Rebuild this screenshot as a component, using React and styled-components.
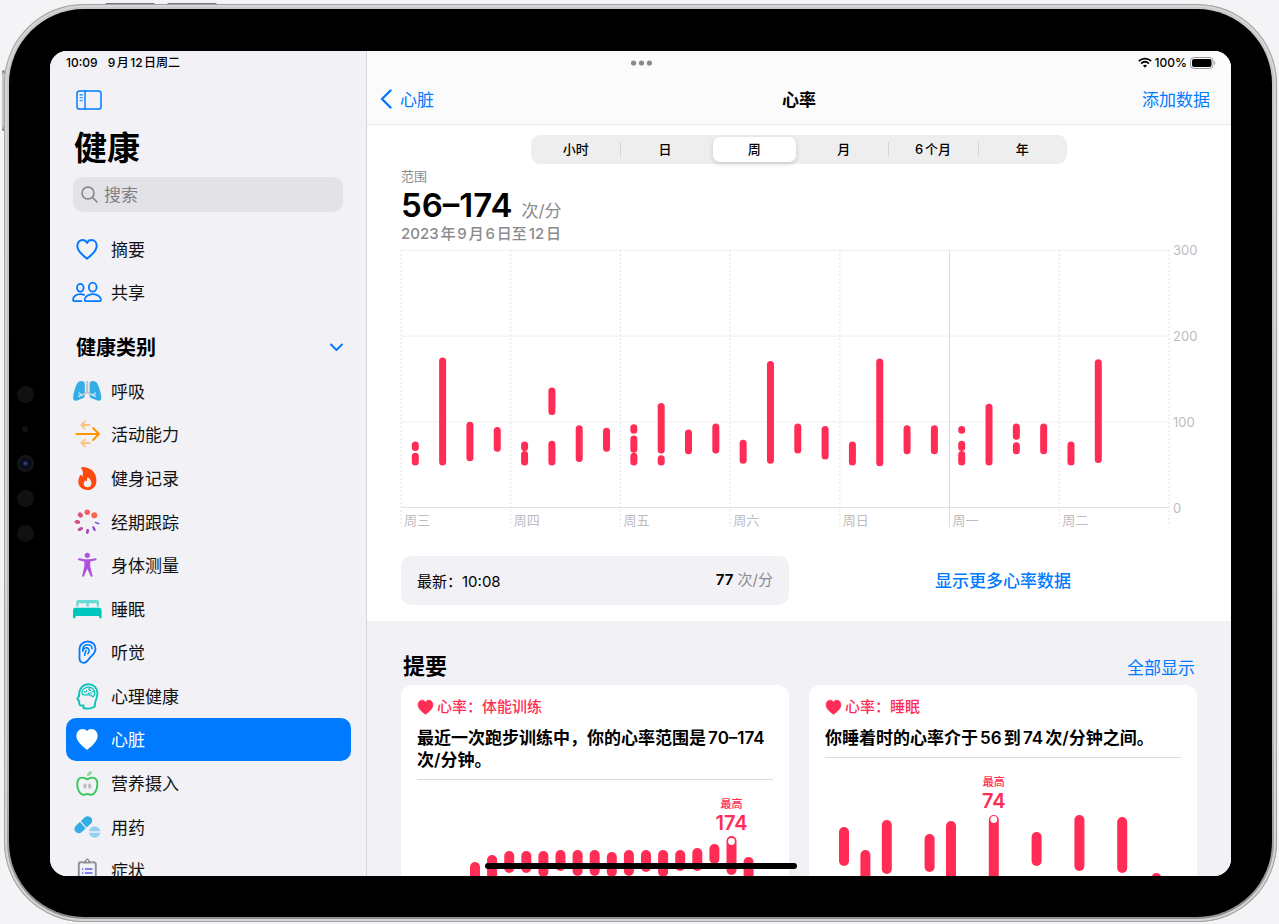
import React, { useState } from "react";
import styled, { createGlobalStyle, css } from "styled-components";

const BLUE = "#007aff";
const PINK = "#ff2d55";
const GREY = "#8a8a8e";
const FONT = `Inter, "Noto Sans CJK SC", sans-serif`;

const GlobalStyle = createGlobalStyle`
  *, *::before, *::after { box-sizing: border-box; }
  body { margin: 0; background: #f4f4f6; font-family: ${FONT}; color: #000; text-autospace: normal; }
  h1, h2, h3, p, ul { margin: 0; padding: 0; }
  ul { list-style: none; }
  button, input { font: inherit; color: inherit; background: none; border: 0; padding: 0; margin: 0; }
  button { cursor: pointer; }
  a { color: ${BLUE}; text-decoration: none; }
  svg { display: block; flex: none; }
`;

/* ---------- device ---------- */

const Page = styled.div`
  position: relative;
  display: flex;
  height: 100vh;
  padding: 4px 2px 2px 4px;
`;

const SideKey = styled.span`
  position: absolute;
  background: #77777a;
  border-radius: 2px;
  ${(p) =>
    p.$edge === "top"
      ? css`top: 3px; left: ${p.$at}px; width: 50px; height: 3px;`
      : css`left: 2px; top: ${p.$at}px; width: 3px; height: 61px; background: linear-gradient(#77777a, #c4c4c7 5px 56px, #77777a);`}
`;

const Frame = styled.div`
  position: relative;
  flex: 1;
  display: flex;
  min-width: 0;
  padding: 5px;
  border-radius: 80px;
  background: linear-gradient(#c9c9cb, #b4b4b6 80%, #8f8f91);
  box-shadow: inset 0 0 0 1px #a3a3a5, inset 0 0 0 3px #d6d6d8;
`;

const Bezel = styled.div`
  flex: 1;
  display: flex;
  min-width: 0;
  padding: 42px 41px 41px 0;
  border-radius: 75px;
  background: #000;
`;

const Sensors = styled.div`
  flex: none;
  width: 41px;
  display: flex;
  flex-direction: column;
  align-items: center;
  justify-content: center;
  gap: 18px;
  padding-right: 9px;
`;

const Sensor = styled.span`
  width: ${(p) => (p.$small ? 6 : 17)}px;
  height: ${(p) => (p.$small ? 6 : 17)}px;
  margin: ${(p) => (p.$small ? "5px 0" : "0")};
  border-radius: 50%;
  background: ${(p) => (p.$lens ? "radial-gradient(#24407f 0 1px, #0b0c18 3px 6px, #17171a 7px)" : "#111112")};
`;

const Screen = styled.div`
  position: relative;
  flex: 1;
  display: flex;
  min-width: 0;
  overflow: hidden;
  border-radius: 17px;
  background: #fff;
`;

const StatusBar = styled.div`
  position: absolute;
  z-index: 2;
  top: 0;
  left: 0;
  right: 0;
  height: 24px;
  padding: 0 15px 1px 16px;
  display: grid;
  grid-template-columns: 1fr auto 1fr;
  align-items: center;
  font-size: 12px;
  line-height: 16px;
  font-weight: 500;
`;

const StatusGroup = styled.div`
  display: flex;
  align-items: center;
  gap: ${(p) => p.$gap}px;
  justify-content: ${(p) => (p.$end ? "flex-end" : "flex-start")};
`;

const HomeIndicator = styled.div`
  position: absolute;
  z-index: 2;
  bottom: 7px;
  left: 0;
  right: 0;
  margin: 0 auto;
  width: 312px;
  height: 6px;
  border-radius: 3px;
  background: #000;
`;

/* ---------- sidebar ---------- */

const Sidebar = styled.nav`
  flex: none;
  width: 317px;
  padding: 0 15px 0 16px;
  overflow: hidden;
  background: #f2f1f6;
  border-right: 1px solid #d6d6da;
`;

const SidebarTop = styled.div`
  height: 73px;
  padding: 24px 0 0 10px;
  display: flex;
  align-items: center;
`;

const AppTitle = styled.h1`
  padding-left: 8px;
  font-size: 33px;
  line-height: 48px;
  font-weight: 700;
`;

const SearchField = styled.label`
  display: flex;
  align-items: center;
  gap: 6px;
  height: 35px;
  margin: 5px 8px 15px 7px;
  padding: 0 8px;
  border-radius: 10px;
  background: #e3e2e7;
  color: #808085;

  input {
    flex: 1;
    min-width: 0;
    font-size: 17px;
    outline: 0;
  }
  input::placeholder { color: #808085; opacity: 1; }
`;

const NavList = styled.ul`
  display: grid;
  grid-auto-rows: 1fr;
  height: ${(p) => p.$height}px;
`;

const NavLink = styled.a`
  display: flex;
  align-items: center;
  gap: 9px;
  height: 100%;
  padding-left: 6px;
  border-radius: 10px;
  font-size: 17px;
  color: ${(p) => (p.$active ? "#fff" : "#111")};
  background: ${(p) => (p.$active ? BLUE : "transparent")};
`;

const NavLabel = styled.span`
  padding-bottom: 1px;
`;

const GroupToggle = styled.button`
  display: flex;
  align-items: center;
  justify-content: space-between;
  width: 100%;
  height: 44px;
  margin-top: 11px;
  padding: 0 8px 0 10px;
  font-size: 20px;
  font-weight: 700;
  color: #000;
`;

/* ---------- main ---------- */

const Main = styled.main`
  flex: 1;
  min-width: 0;
  overflow: hidden;
  background: #f2f1f6;
`;

const Header = styled.header`
  display: grid;
  grid-template-columns: 1fr auto 1fr;
  align-items: center;
  height: 74px;
  padding: 24px 13px 2px;
  background: #fbfbfc;
  border-bottom: 1px solid #e8e8ea;
  font-size: 17px;
`;

const BackLink = styled.a`
  display: flex;
  align-items: center;
  gap: 8px;
`;

const HeaderTitle = styled.h2`
  font-size: 17px;
  font-weight: 700;
`;

const HeaderAction = styled.button`
  justify-self: end;
  margin-right: 8px;
  color: ${BLUE};
`;

const Panel = styled.section`
  padding: 10px 34px 16px;
  background: #fff;
`;

const Segmented = styled.div`
  display: grid;
  grid-template-columns: repeat(6, 1fr);
  width: 68%;
  max-width: 536px;
  height: 29px;
  margin: 0 auto 3px;
  padding: 2px 0;
  border-radius: 9px;
  background: #eeeeef;
`;

const Segment = styled.button`
  position: relative;
  margin: 0 3px;
  padding-bottom: 2px;
  border-radius: 7px;
  font-size: 13px;
  font-weight: 500;
  ${(p) => p.$active && css`background: #fff; box-shadow: 0 2px 5px rgba(0, 0, 0, 0.16);`}
  ${(p) =>
    p.$divided &&
    css`
      &::before {
        content: "";
        position: absolute;
        left: -3px;
        top: 5px;
        bottom: 5px;
        width: 1px;
        background: #d5d5d8;
      }
    `}
`;

const RangeLabel = styled.p`
  font-size: 13px;
  line-height: 18px;
  color: ${GREY};
`;

const RangeValue = styled.p`
  display: flex;
  align-items: baseline;
  gap: 9px;
  height: 40px;
  font-size: 33px;
  line-height: 40px;
  font-weight: 600;
`;

const Unit = styled.span`
  font-size: ${(p) => p.$size}px;
  line-height: 20px;
  font-weight: 400;
  color: ${GREY};
`;

const RangeDate = styled.p`
  font-size: 15px;
  line-height: 18px;
  font-weight: 500;
  color: ${GREY};
`;

const ChartSvg = styled.svg`
  width: 100%;
  height: auto;
  margin: 7px 0 28px;
  overflow: visible;
  font-size: 13px;
  fill: #bcbcc0;
`;

const Columns = styled.div`
  display: grid;
  grid-template-columns: 1fr 1fr;
  gap: 20px;
`;

const LatestCard = styled.div`
  display: flex;
  align-items: center;
  justify-content: space-between;
  height: 49px;
  padding: 0 16px 1px;
  border-radius: 10px;
  background: #f2f1f6;
  font-size: 15px;

  strong { font-weight: 600; }
`;

const MoreLink = styled.a`
  place-self: center;
  padding-bottom: 2px;
  font-size: 17px;
  font-weight: 500;
`;

const Highlights = styled.section`
  padding: 31px 34px 0;
`;

const SectionHead = styled.div`
  display: flex;
  align-items: baseline;
  justify-content: space-between;
  height: 28px;
  margin-bottom: 5px;
  padding: 0 2px;
  line-height: 28px;
  font-size: 17px;

  h2 { font-size: 22px; font-weight: 700; }
`;

const Card = styled.article`
  padding: 12px 16px 0;
  border-radius: 12px;
  background: #fff;
`;

const CardTitle = styled.h3`
  display: flex;
  align-items: center;
  gap: 3px;
  font-size: 15px;
  line-height: 20px;
  font-weight: 500;
  color: ${PINK};
`;

const CardText = styled.p`
  margin-top: 10px;
  padding-bottom: 8px;
  border-bottom: 1px solid #dcdcdf;
  font-size: 17px;
  line-height: 22px;
  font-weight: 600;
`;

const MiniSvg = styled.svg`
  width: 100%;
  height: auto;
  text-anchor: middle;
  fill: ${PINK};
`;

/* ---------- icons ---------- */

const HEART =
  "M15 24.6C11 21.6 5.3 17.4 5.3 12c0-3.4 2.3-5.9 5.2-5.9 2 0 3.6 1 4.5 2.8.9-1.8 2.5-2.8 4.5-2.8 2.9 0 5.2 2.5 5.2 5.9 0 5.4-5.7 9.6-9.7 12.6Z";

const Icon = ({ children, size = 30, ...rest }) => (
  <svg width={size} height={size} viewBox="0 0 30 30" fill="none" strokeLinecap="round" strokeLinejoin="round" aria-hidden="true" {...rest}>
    {children}
  </svg>
);

const icons = {
  heart: <path d={HEART} stroke={BLUE} strokeWidth="2" />,
  people: (
    <g stroke={BLUE} strokeWidth="1.8">
      <ellipse cx="20.7" cy="10.2" rx="3.9" ry="4.5" />
      <path d="M12.6 22.9c0-3 3.4-5.7 8.2-5.7s8.2 2.7 8.2 5.7c0 .7-.5 1.2-1.2 1.2h-14c-.7 0-1.2-.5-1.2-1.2Z" />
      <ellipse cx="8.3" cy="10.8" rx="3.3" ry="3.9" />
      <path d="M12 17.8c-1-.4-2.2-.6-3.6-.6-4.3 0-7.4 2.5-7.4 5.6 0 .8.5 1.3 1.2 1.3h7.3" />
    </g>
  ),
  lungs: (
    <g>
      <path d="M9.6 5C12 5 12.8 6.4 12.8 8.4V19.5C12.8 21.6 11.5 22.3 9.6 22.8L5 24.6C2.7 25.3 1 24.2 1.1 21.8C1.3 17.5 2.9 12 4.6 8.4C5.8 6 7.4 5 9.6 5Z" fill="#32ade6" />
      <path d="M20.8 5C18.4 5 17.6 6.4 17.6 8.4V19.5C17.6 21.6 18.9 22.3 20.8 22.8L25.4 24.6C27.7 25.3 29.4 24.2 29.3 21.8C29.1 17.5 27.5 12 25.8 8.4C24.6 6 23 5 20.8 5Z" fill="#32ade6" />
      <path d="M12.8 17.7 7 20.3M9.6 19.1 7 17M17.6 17.7 23.4 20.3M20.8 19.1 23.4 17" stroke="#bfe3f5" strokeWidth="1.6" />
      <path d="M15.2 5.8V16M15.2 16 12.6 18M15.2 16 17.8 18" stroke="#c3c3c8" strokeWidth="2.2" />
    </g>
  ),
  mobility: (
    <g>
      <path d="M4.5 15H27M21 9 27 15 21 21" stroke="#ff9500" strokeWidth="2" />
      <path d="M9.4 6H17.6M12.8 2.6 9.4 6 12.8 9.4M9.4 24H17.6M12.8 20.6 9.4 24 12.8 27.4" stroke="#fcc37f" strokeWidth="1.9" />
    </g>
  ),
  flame: (
    <path
      fillRule="evenodd"
      fill="#ff4a0b"
      d="M9.2 4.7C9.3 4.2 9.8 4 10.4 4C18 4 24.4 9 24.4 17.4C24.4 23.3 20.8 27 15.4 27C10 27 6.3 23.6 6.3 18.6C6.3 15.9 7.3 13.6 8.5 12C8.8 11.6 9.3 11.7 9.4 12.2C9.5 12.8 9.8 13.3 10.3 13.6C11.6 10.9 10.9 7.4 9.4 5.5C9.2 5.2 9.1 5 9.2 4.7ZM15.6 14.4C15.3 14.3 15 14.5 15.1 14.9C15.4 16.4 15 17.6 14.2 18.7C13.9 18.4 13.7 18 13.6 17.7C13.5 17.4 13.2 17.4 13 17.6C12.2 18.5 11.7 19.6 11.7 20.8C11.7 23 13.2 24.2 15.5 24.2C17.9 24.2 19.4 22.8 19.4 20.4C19.4 17.5 17.9 15.1 15.6 14.4Z"
    />
  ),
  cycle: (
    <g>
      <circle cx="15.3" cy="5.3" r="2.7" fill="#fb5b60" />
      <circle cx="22.3" cy="8.3" r="3" fill="#ff6550" />
      <ellipse cx="8.3" cy="8" rx="2.8" ry="2.4" transform="rotate(40 8.3 8)" fill="#e0567a" />
      <ellipse cx="5.3" cy="15" rx="2.8" ry="2" transform="rotate(8 5.3 15)" fill="#d4518a" />
      <ellipse cx="8.4" cy="22" rx="2.9" ry="1.7" transform="rotate(-25 8.4 22)" fill="#c04c9c" />
      <ellipse cx="15.5" cy="24.4" rx="1.5" ry="2.7" transform="rotate(10 15.5 24.4)" fill="#a94cae" />
      <ellipse cx="22" cy="21.6" rx="1.2" ry="2.9" transform="rotate(-28 22 21.6)" fill="#8a4fc8" />
      <ellipse cx="25" cy="16" rx="2.7" ry=".8" transform="rotate(20 25 16)" fill="#6a4fe0" />
    </g>
  ),
  body: (
    <g fill="#af52de">
      <circle cx="15.3" cy="5.3" r="2.6" />
      <path d="M7 8.3 13 9.2H17.6L23.6 8.3C24.8 8.2 25 9.9 23.9 10.2L18.3 11.4C18 14.5 18.2 16.5 18.8 18.8L20.5 25.6C20.7 26.9 19 27.3 18.5 26.1L15.3 18.8 12.1 26.1C11.6 27.3 9.9 26.9 10.2 25.6L11.8 18.8C12.4 16.5 12.6 14.5 12.3 11.4L6.7 10.2C5.6 9.9 5.8 8.2 7 8.3Z" />
    </g>
  ),
  bed: (
    <g>
      <path d="M4.3 12.6V8C4.3 6.7 5 6 6.3 6H25C26.3 6 27 6.7 27 8V12.6H24.8V10.6C24.8 9.7 24.3 9.2 23.4 9.2H18.2C17.3 9.2 16.8 9.7 16.8 10.6V12.6H14.4V10.6C14.4 9.7 13.9 9.2 13 9.2H7.9C7 9.2 6.5 9.7 6.5 10.6V12.6Z" fill="#6adcd6" />
      <path d="M3.4 13.8H27.2C28.7 13.8 29.6 14.7 29.6 16.2V23.6C29.6 24.6 27.1 24.6 27.1 23.6V22H3.5V23.6C3.5 24.6 1 24.6 1 23.6V16.2C1 14.7 1.9 13.8 3.4 13.8Z" fill="#00c7be" />
    </g>
  ),
  ear: (
    <g stroke={BLUE} strokeWidth="1.8">
      <path d="M7.5 12.5C7.5 7.8 10.8 4.5 15.6 4.5C20.3 4.5 23.5 7.5 23.5 11.7C23.5 15.8 20.5 17.9 18.2 20.3C16.3 22.3 15.2 25.8 11.9 25.8C9.2 25.8 7.5 24 7.5 21.3Z" />
      <path d="M10.8 14.2V12.6C10.8 9.6 12.7 7.7 15.5 7.7C18.2 7.7 20 9.3 20 11.7" strokeWidth="1.5" />
      <path d="M11 13.2C12 10.8 14 10.3 15.5 11C17.6 12 17.7 14.8 15.9 16.6M14.2 13.3C13.3 14.8 12.7 16.5 12.6 18.4" strokeWidth="1.5" />
    </g>
  ),
  mind: (
    <g stroke="#0fc3b8" strokeWidth="1.9">
      <path d="M11.5 27V24.5H9.3C7.9 24.5 7.2 23.7 7.2 22.3V20L5.6 18.5C5.2 18 5.2 17.6 5.6 17.1L7 15.2C6.7 8.2 10.6 3.3 16.6 3.3C22 3.3 25.4 7 25.4 12.2C25.4 17 23.6 18.6 23.2 21.5C22.9 23.4 22.8 24.8 22.8 25.5C20 27.5 15 28 11.5 27Z" />
      <path d="M10 12.5C9.8 8.6 12.8 6.2 16.5 6.2C20.4 6.2 22.8 8.7 22.7 12.2C22.7 14.2 21.8 15.7 20.6 15.6C19.4 15.5 19.6 13.8 17.7 13.8H12.3C10.9 13.8 10.1 13.4 10 12.5Z" strokeWidth="1.3" />
      <path d="M12.3 10.6C13.3 11.5 14.6 11 14.7 9.6M17.4 7.2C16.2 8.5 17.2 9.8 18.8 9.2M16 13.2C16 11.7 18.3 11.3 19.3 12.3M20.3 10.5 22 10.9" strokeWidth="1.2" />
    </g>
  ),
  heartFill: <path d={HEART} fill="#fff" stroke="#fff" strokeWidth="2" />,
  apple: (
    <g>
      <path d="M15.3 11.3C13.5 10.6 12.3 9.6 10.2 9.6C7 9.6 5.2 12.5 5.2 16.3C5.2 21 8 26.9 11.6 26.9C13.2 26.9 13.8 26 15.3 26C16.8 26 17.4 26.9 19 26.9C22.6 26.9 25.4 21 25.4 16.3C25.4 12.5 23.6 9.6 20.4 9.6C18.3 9.6 17.1 10.6 15.3 11.3Z" stroke="#34c759" strokeWidth="1.9" />
      <path d="M14.9 8.2C14.8 5.5 16.8 3.3 19.9 3C20.1 5.8 18 8 14.9 8.2Z" fill="#86dc9b" />
      <ellipse cx="13" cy="18" rx="1.6" ry="2.7" fill="#bcbcc0" />
      <ellipse cx="17.7" cy="18" rx="1.6" ry="2.7" fill="#bcbcc0" />
    </g>
  ),
  pills: (
    <g>
      <g transform="rotate(-43 11.3 12.7)">
        <rect x="0.8" y="8.3" width="21" height="8.8" rx="4.4" fill="#32ade6" />
        <path d="M11.3 7.5V18" stroke="#f2f1f6" strokeWidth="1.2" />
      </g>
      <circle cx="22.7" cy="20" r="5.8" fill="#93d0f1" />
      <path d="M16 20H30" stroke="#f2f1f6" strokeWidth="1.3" />
    </g>
  ),
  clipboard: (
    <g>
      <path d="M10 7.2H9C7.5 7.2 6.8 8 6.8 9.4V25.5C6.8 27 7.5 27.8 9 27.8H21.5C23 27.8 23.8 27 23.8 25.5V9.4C23.8 8 23 7.2 21.5 7.2H20.6" stroke="#8e8e93" strokeWidth="1.9" />
      <path d="M11 8.6V6.8C11 6.2 11.4 5.9 12 5.9H13C13.3 4.4 14.1 3.5 15.3 3.5C16.5 3.5 17.3 4.4 17.6 5.9H18.6C19.2 5.9 19.6 6.2 19.6 6.8V8.6Z" fill="#8e8e93" />
      <circle cx="15.3" cy="6" r=".9" fill="#f2f1f6" />
      <path d="M13.5 14H20M13.5 18H20M13.5 22H20M10.6 14H10.7M10.6 18H10.7M10.6 22H10.7" stroke="#5e5ce6" strokeWidth="1.5" />
    </g>
  ),
};

const SidebarIcon = () => (
  <svg width="27" height="20" viewBox="0 0 27 20" fill="none" stroke={BLUE} strokeLinecap="round" aria-hidden="true">
    <rect x="1" y="1" width="24" height="18" rx="2.6" strokeWidth="1.5" />
    <path d="M9 1V19" strokeWidth="1.4" />
    <path d="M4 4.9H6.3M4 7.8H6.3M4 10.7H6.3" strokeWidth="1.1" />
  </svg>
);

const SearchIcon = () => (
  <svg width="17" height="17" viewBox="0 0 17 17" fill="none" stroke="currentColor" strokeWidth="1.5" strokeLinecap="round" aria-hidden="true">
    <circle cx="7" cy="7" r="6" />
    <path d="M11.5 11.5 16 16" />
  </svg>
);

const Chevron = ({ d, w, h, sw }) => (
  <svg width={w} height={h} viewBox={`0 0 ${w} ${h}`} fill="none" stroke={BLUE} strokeWidth={sw} strokeLinecap="round" strokeLinejoin="round" aria-hidden="true">
    <path d={d} />
  </svg>
);

const Wifi = () => (
  <svg width="14" height="11" viewBox="0 0 14 11" fill="none" stroke="#000" strokeWidth="1.9" aria-hidden="true">
    <path d="M.8 4.2C4.3.7 9.7.7 13.2 4.2" />
    <path d="M3.1 6.6C5.4 4.5 8.6 4.5 10.9 6.6" />
    <path d="M7 10.8 4.9 8.6C6.1 7.6 7.9 7.6 9.1 8.6Z" fill="#000" stroke="none" />
  </svg>
);

const Battery = () => (
  <svg width="26" height="12" viewBox="0 0 26 12" fill="none" aria-hidden="true">
    <rect x=".5" y=".5" width="22.5" height="11" rx="3.3" stroke="#9a9a9d" />
    <rect x="2" y="2" width="19.5" height="8" rx="1.9" fill="#000" />
    <path d="M24.3 4V8C25.7 7.5 25.7 4.5 24.3 4Z" fill="#9a9a9d" />
  </svg>
);

const Dots = () => (
  <svg width="21" height="6" viewBox="0 0 21 6" fill="#8a8a8d" aria-hidden="true">
    <circle cx="2.6" cy="3" r="2.6" />
    <circle cx="10.5" cy="3" r="2.6" />
    <circle cx="18.4" cy="3" r="2.6" />
  </svg>
);

const PinkHeart = () => (
  <svg width="17" height="16" viewBox="4 4.5 22 21" aria-hidden="true">
    <path d={HEART} fill={PINK} stroke={PINK} strokeWidth="1" />
  </svg>
);

/* ---------- data ---------- */

const PRIMARY = [
  ["heart", "摘要"],
  ["people", "共享"],
];

const CATEGORIES = [
  ["lungs", "呼吸"],
  ["mobility", "活动能力"],
  ["flame", "健身记录"],
  ["cycle", "经期跟踪"],
  ["body", "身体测量"],
  ["bed", "睡眠"],
  ["ear", "听觉"],
  ["mind", "心理健康"],
  ["heartFill", "心脏"],
  ["apple", "营养摄入"],
  ["pills", "用药"],
  ["clipboard", "症状"],
];

const PERIODS = ["小时", "日", "周", "月", "6个月", "年"];
const DAYS = ["周三", "周四", "周五", "周六", "周日", "周一", "周二"];

/* [high, low] beats per minute, one entry for each six hours */
const WEEK = [
  [[77, 66], [64, 49]],
  [[175, 49]],
  [[100, 54]],
  [[94, 65]],
  [[77, 66], [66, 49]],
  [[140, 108], [78, 49]],
  [[96, 53]],
  [[93, 65]],
  [[97, 86], [84, 64], [64, 49]],
  [[122, 63], [61, 49]],
  [[91, 62]],
  [[98, 63]],
  [[79, 51]],
  [[171, 51]],
  [[98, 63]],
  [[95, 56]],
  [[77, 49]],
  [[174, 48]],
  [[96, 62]],
  [[96, 62]],
  [[95, 86], [78, 66], [66, 49]],
  [[121, 49]],
  [[98, 79], [76, 62]],
  [[98, 62]],
  [[77, 49]],
  [[173, 52]],
];

/* [column, top, bottom] */
const WORKOUT = [
  [0, 82, 106], [1, 75, 104], [2, 71, 93], [3, 71, 93], [4, 71, 97], [5, 70, 91],
  [6, 70, 96], [7, 70, 96], [8, 72, 97], [9, 70, 96], [10, 70, 92], [11, 70, 97],
  [12, 70, 91], [13, 68, 91], [14, 64, 84], [15, 56, 95], [16, 77, 102],
];

const SLEEP = [
  [0, 69, 108], [1, 92, 130], [2, 62, 116], [4, 76, 114], [5, 63, 124], [7, 57, 126],
  [9, 74, 108], [11, 57, 113], [13, 59, 115], [14.6, 115, 132],
];

/* ---------- charts ---------- */

const yOf = (bpm) => 257.5 - bpm * 0.857;

const WeekChart = () => {
  const day = 768 / 7;
  return (
    <ChartSvg viewBox="0 0 796 278" role="img" aria-label="心率">
      {[0, 100, 200, 300].map((v) => (
        <g key={v}>
          <line x1="0" x2="768" y1={yOf(v)} y2={yOf(v)} stroke={v ? "#f0f0f1" : "#e2e2e4"} />
          <text x="772" y={yOf(v) + 5}>{v}</text>
        </g>
      ))}
      {[...DAYS, ""].map((name, i) => (
        <g key={i}>
          <line
            x1={i * day}
            x2={i * day}
            y1="0"
            y2="277"
            stroke={i === 5 ? "#dcdcde" : "#e2e2e4"}
            strokeDasharray={i === 5 ? "none" : "2 2"}
          />
          <text x={i * day + 3} y="275">{name}</text>
        </g>
      ))}
      {WEEK.map((parts, i) =>
        parts.map(([hi, lo], j) => (
          <rect key={`${i}-${j}`} x={10.8 + i * 27.32} y={yOf(hi)} width="7" height={yOf(lo) - yOf(hi)} rx="3.5" fill={PINK} />
        ))
      )}
    </ChartSvg>
  );
};

const MiniChart = ({ bars, start, step, peak, value }) => {
  const px = start + step * peak;
  return (
    <MiniSvg viewBox="0 0 356 140" role="img" aria-label={`最高 ${value}`}>
      <text x={px} y="28" fontSize="11" fontWeight="500">最高</text>
      <text x={px} y="50" fontSize="20" fontWeight="600">{value}</text>
      {bars.map(([col, top, bottom]) => (
        <rect key={col} x={start + step * col - 5} y={top} width="10" height={bottom - top} rx="5" />
      ))}
      <circle cx={px} cy="61.5" r="3.4" fill="#fff" />
    </MiniSvg>
  );
};

/* ---------- app ---------- */

const NavItems = ({ items, height, active, onPick }) => (
  <NavList $height={height}>
    {items.map(([icon, label]) => (
      <li key={label}>
        <NavLink
          href="#"
          $active={active === label}
          onClick={(e) => {
            e.preventDefault();
            onPick(label);
          }}
        >
          <Icon>{icons[icon]}</Icon>
          <NavLabel>{label}</NavLabel>
        </NavLink>
      </li>
    ))}
  </NavList>
);

export default function App() {
  const [active, setActive] = useState("心脏");
  const [period, setPeriod] = useState(2);
  return (
    <>
      <GlobalStyle />
      <Page>
        <SideKey $edge="top" $at={105} />
        <SideKey $edge="top" $at={167} />
        <SideKey $edge="left" $at={70} />
        <Frame>
          <Bezel>
            <Sensors>
              <Sensor />
              <Sensor $small />
              <Sensor $lens />
              <Sensor />
              <Sensor />
            </Sensors>
            <Screen>
              <StatusBar>
                <StatusGroup $gap={10}>
                  <span>10:09</span>
                  <span>9月12日周二</span>
                </StatusGroup>
                <Dots />
                <StatusGroup $gap={3} $end>
                  <Wifi />
                  <span>100%</span>
                  <Battery />
                </StatusGroup>
              </StatusBar>

              <Sidebar>
                <SidebarTop>
                  <button type="button" aria-label="边栏">
                    <SidebarIcon />
                  </button>
                </SidebarTop>
                <AppTitle>健康</AppTitle>
                <SearchField>
                  <SearchIcon />
                  <input type="text" placeholder="搜索" aria-label="搜索" />
                </SearchField>
                <NavItems items={PRIMARY} height={87} active={active} onPick={setActive} />
                <GroupToggle type="button">
                  <NavLabel>健康类别</NavLabel>
                  <Chevron d="M1 1.5 6.5 7 12 1.5" w={13} h={9} sw={1.9} />
                </GroupToggle>
                <NavItems items={CATEGORIES} height={523} active={active} onPick={setActive} />
              </Sidebar>

              <Main>
                <Header>
                  <BackLink href="#">
                    <Chevron d="M10.5 1.5 2 10 10.5 18.5" w={12} h={20} sw={2.4} />
                    心脏
                  </BackLink>
                  <HeaderTitle>心率</HeaderTitle>
                  <HeaderAction type="button">添加数据</HeaderAction>
                </Header>

                <Panel>
                  <Segmented>
                    {PERIODS.map((name, i) => (
                      <Segment
                        key={name}
                        type="button"
                        aria-pressed={i === period}
                        $active={i === period}
                        $divided={i > 0 && i !== period && i !== period + 1}
                        onClick={() => setPeriod(i)}
                      >
                        {name}
                      </Segment>
                    ))}
                  </Segmented>
                  <RangeLabel>范围</RangeLabel>
                  <RangeValue>
                    56–174 <Unit $size={17}>次/分</Unit>
                  </RangeValue>
                  <RangeDate>2023年9月6日至12日</RangeDate>
                  <WeekChart />
                  <Columns>
                    <LatestCard>
                      <span>最新：10:08</span>
                      <span>
                        <strong>77</strong> <Unit $size={15}>次/分</Unit>
                      </span>
                    </LatestCard>
                    <MoreLink href="#">显示更多心率数据</MoreLink>
                  </Columns>
                </Panel>

                <Highlights>
                  <SectionHead>
                    <h2>提要</h2>
                    <a href="#">全部显示</a>
                  </SectionHead>
                  <Columns>
                    <Card>
                      <CardTitle>
                        <PinkHeart />
                        心率：体能训练
                      </CardTitle>
                      <CardText>最近一次跑步训练中，你的心率范围是70–174次/分钟。</CardText>
                      <MiniChart bars={WORKOUT} start={58} step={17.1} peak={15} value="174" />
                    </Card>
                    <Card>
                      <CardTitle>
                        <PinkHeart />
                        心率：睡眠
                      </CardTitle>
                      <CardText>你睡着时的心率介于56到74次/分钟之间。</CardText>
                      <MiniChart bars={SLEEP} start={19} step={21.4} peak={7} value="74" />
                    </Card>
                  </Columns>
                </Highlights>
              </Main>
              <HomeIndicator />
            </Screen>
          </Bezel>
        </Frame>
      </Page>
    </>
  );
}
